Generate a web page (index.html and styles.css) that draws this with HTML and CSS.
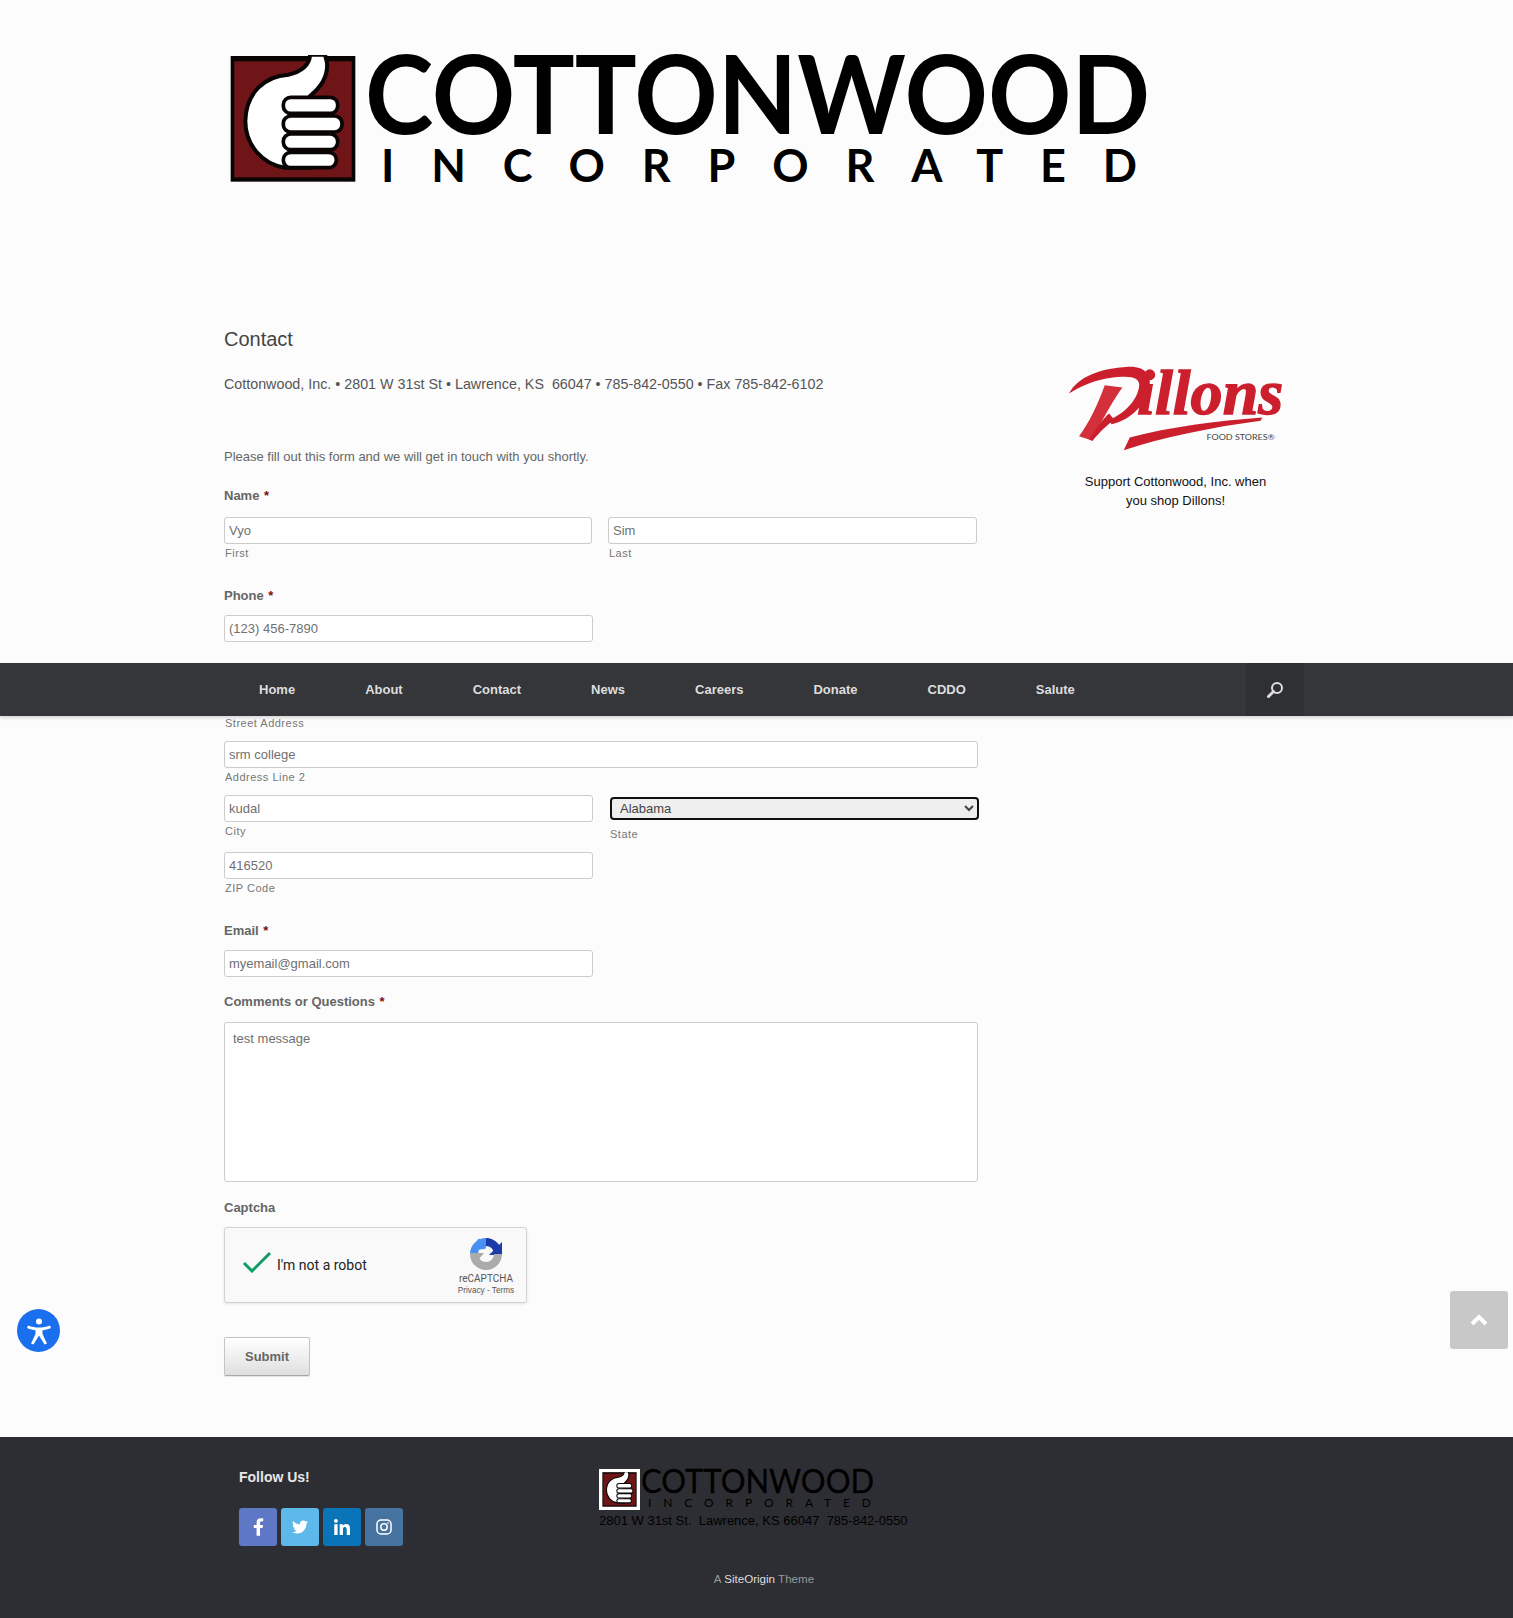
FILE: index.html
```html
<!DOCTYPE html>
<html lang="en">
  <head>
    <meta charset="UTF-8" />
    <meta name="viewport" content="width=device-width, initial-scale=1.0" />
    <title>Contact - Cottonwood, Inc.</title>
    <link rel="stylesheet" href="styles.css">
  </head>
  <body>
    <svg class="defs" width="0" height="0" aria-hidden="true">
      <symbol id="thumb" viewBox="90 78 378 382">
        <rect x="92" y="80" width="374" height="377" fill="#0a0505" />
        <rect x="103" y="96" width="352" height="348" fill="#6f1518" />
        <path d="M330 76 C330 105 305 128 265 136 C195 140 138 190 136 275 C136 345 185 405 255 415 L330 415 L330 200 C355 180 385 145 381 100 L375 76 Z" fill="#fff" stroke="#0a0505" stroke-width="12" />
        <rect x="250" y="204" width="163" height="48" rx="22" fill="#fff" stroke="#0a0505" stroke-width="11" />
        <rect x="250" y="260" width="176" height="48" rx="22" fill="#fff" stroke="#0a0505" stroke-width="11" />
        <rect x="250" y="314" width="163" height="47" rx="22" fill="#fff" stroke="#0a0505" stroke-width="11" />
        <rect x="250" y="369" width="159" height="46" rx="22" fill="#fff" stroke="#0a0505" stroke-width="11" />
      </symbol>
    </svg>

    <header class="site-header">
      <svg class="logo" viewBox="0 -30 980 180" role="img" aria-label="Cottonwood Incorporated">
        <use href="#thumb" x="6" y="5" width="126" height="128" />
        <text class="logo-name" x="141" y="84" textLength="785" lengthAdjust="spacingAndGlyphs">COTTONWOOD</text>
        <text class="logo-sub" x="157" y="132" textLength="756" lengthAdjust="spacing">INCORPORATED</text>
      </svg>
    </header>

    <nav class="main-nav">
      <div class="nav-inner">
        <ul class="nav-links">
          <li><a href="#">Home</a></li>
          <li><a href="#">About</a></li>
          <li><a href="#">Contact</a></li>
          <li><a href="#">News</a></li>
          <li><a href="#">Careers</a></li>
          <li><a href="#">Donate</a></li>
          <li><a href="#">CDDO</a></li>
          <li><a href="#">Salute</a></li>
        </ul>
        <div class="nav-search">
          <svg width="20" height="20" viewBox="0 0 20 20" fill="none" stroke="#ddd">
            <circle cx="12" cy="8" r="5" stroke-width="2" />
            <path d="M8.5 11.5 L3.5 16.5" stroke-width="3" stroke-linecap="round" />
          </svg>
        </div>
      </div>
    </nav>

    <main class="content">
      <div class="primary">
        <h1>Contact</h1>
        <p class="address-line">Cottonwood, Inc. • 2801 W 31st St • Lawrence, KS&nbsp; 66047 • 785-842-0550 • Fax 785-842-6102</p>
        <p class="intro">Please fill out this form and we will get in touch with you shortly.</p>

        <form class="contact-form">
          <div class="group group-name">
            <label class="field-label">Name <span class="req">*</span></label>
            <div class="row">
              <div class="half name-half">
                <input type="text" value="Vyo" />
                <span class="sub">First</span>
              </div>
              <div class="half name-half">
                <input type="text" value="Sim" />
                <span class="sub">Last</span>
              </div>
            </div>
          </div>

          <div class="group group-phone">
            <label class="field-label">Phone <span class="req">*</span></label>
            <input class="half-input" type="text" value="(123) 456-7890" />
          </div>

          <div class="group group-address">
            <label class="field-label">Address <span class="req">*</span></label>
            <input type="text" value="" />
            <span class="sub">Street Address</span>
            <div class="line">
              <input type="text" value="srm college" />
              <span class="sub">Address Line 2</span>
            </div>
            <div class="line row">
              <div class="half">
                <input type="text" value="kudal" />
                <span class="sub">City</span>
              </div>
              <div class="half state">
                <select>
                  <option>Alabama</option>
                </select>
                <span class="sub">State</span>
              </div>
            </div>
            <div class="line">
              <input class="half-input" type="text" value="416520" />
              <span class="sub">ZIP Code</span>
            </div>
          </div>

          <div class="group group-email">
            <label class="field-label">Email <span class="req">*</span></label>
            <input class="half-input" type="text" value="myemail@gmail.com" />
          </div>

          <div class="group group-comments">
            <label class="field-label">Comments or Questions <span class="req">*</span></label>
            <textarea>test message</textarea>
          </div>

          <div class="group group-captcha">
            <label class="field-label">Captcha</label>
            <div class="recaptcha">
              <svg class="recaptcha-check" width="30" height="22" viewBox="0 0 30 22" fill="none">
                <path d="M2 12 L10 20 L28 2" stroke="#0f9d63" stroke-width="3" />
              </svg>
              <span class="recaptcha-text">I'm not a robot</span>
              <div class="recaptcha-brand">
                <svg width="32" height="32" viewBox="0 0 32 32" fill="none">
                  <path d="M4 16 A12 12 0 0 1 16 4" stroke="#4a90f2" stroke-width="8" />
                  <path d="M8 1 L20 1 L15 11 L3 12 Z" fill="#4a90f2" />
                  <path d="M16 4 A12 12 0 0 1 28 16" stroke="#1c3aa9" stroke-width="8" />
                  <path d="M32 4 L32 17 L19 17 Z" fill="#1c3aa9" />
                  <path d="M28 16 A12 12 0 0 1 4 16" stroke="#ababab" stroke-width="8" />
                  <path d="M0 15 L14 15 L4 27 Z" fill="#ababab" />
                </svg>
                <span class="recaptcha-name">reCAPTCHA</span>
                <span class="recaptcha-links">Privacy - Terms</span>
              </div>
            </div>
          </div>

          <button class="submit" type="submit">Submit</button>
        </form>
      </div>

      <aside class="sidebar">
        <svg class="dillons" viewBox="55 15 650 290" role="img" aria-label="Dillons Food Stores">
          <path d="M58 130 C85 80 150 55 235 50 C285 47 308 75 298 115 C285 170 235 212 185 222 L180 208 C225 190 262 150 268 110 C272 85 250 78 215 80 C160 82 105 100 58 130 Z" fill="#cc1f2d" />
          <path d="M165 105 L218 112 C190 150 150 225 125 270 L88 258 C120 215 145 160 165 105 Z" fill="#d4303c" />
          <path d="M118 268 C140 235 160 205 178 190 L195 210 C175 220 150 245 128 272 Z" fill="#cc1f2d" />
          <text class="dillons-word" x="262" y="192" textLength="438" lengthAdjust="spacingAndGlyphs">illons</text>
          <path d="M222 300 L240 262 C360 230 500 212 637 202 L632 212 C480 232 340 262 222 300 Z" fill="#cc1f2d" />
          <text class="dillons-sub" x="470" y="270" textLength="205" lengthAdjust="spacingAndGlyphs">FOOD STORES®</text>
        </svg>
        <p class="dillons-text">Support Cottonwood, Inc. when you shop Dillons!</p>
      </aside>
    </main>

    <footer class="site-footer">
      <div class="footer-widgets">
        <div class="follow">
          <h3>Follow Us!</h3>
          <div class="socials">
            <a class="social fb" href="#">
              <svg width="11" height="18" viewBox="0 0 320 512" fill="#fff"><path d="M279.14 288l14.22-92.66h-88.91v-60.13c0-25.35 12.42-50.06 52.24-50.06h40.42V6.26S260.43 0 225.36 0c-73.22 0-121.08 44.38-121.08 124.72v70.62H22.89V288h81.39v224h100.17V288z" /></svg>
            </a>
            <a class="social tw" href="#">
              <svg width="16" height="16" viewBox="0 0 512 512" fill="#fff"><path d="M459.37 151.716c.325 4.548.325 9.097.325 13.645 0 138.72-105.583 298.558-298.558 298.558-59.452 0-114.68-17.219-161.137-47.106 8.447.974 16.568 1.299 25.34 1.299 49.055 0 94.213-16.568 130.274-44.832-46.132-.975-84.792-31.188-98.112-72.772 6.498.974 12.995 1.624 19.818 1.624 9.421 0 18.843-1.3 27.614-3.573-48.081-9.747-84.143-51.98-84.143-102.985v-1.299c13.969 7.797 30.214 12.67 47.431 13.319-28.264-18.843-46.781-51.005-46.781-87.391 0-19.492 5.197-37.36 14.294-52.954 51.655 63.675 129.3 105.258 216.365 109.807-1.624-7.797-2.599-15.918-2.599-24.04 0-57.828 46.782-104.934 104.934-104.934 30.213 0 57.502 12.67 76.67 33.137 23.715-4.548 46.456-13.32 66.599-25.34-7.798 24.366-24.366 44.833-46.132 57.827 21.117-2.273 41.584-8.122 60.426-16.243-14.292 20.791-32.161 39.308-52.628 54.253z" /></svg>
            </a>
            <a class="social li" href="#">
              <svg width="16" height="16" viewBox="0 0 448 448" fill="#fff"><path d="M100.28 448H7.4V148.9h92.88zM53.79 108.1C24.09 108.1 0 83.5 0 53.8a53.79 53.79 0 0 1 107.58 0c0 29.7-24.1 54.3-53.79 54.3zM447.9 448h-92.68V302.4c0-34.7-.7-79.2-48.29-79.2-48.29 0-55.69 37.7-55.69 76.7V448h-92.78V148.9h89.08v40.8h1.3c12.4-23.5 42.69-48.3 87.88-48.3 94 0 111.28 61.9 111.28 142.3V448z" /></svg>
            </a>
            <a class="social ig" href="#">
              <svg width="16" height="16" viewBox="0 0 16 16" fill="none" stroke="#fff" stroke-width="1.5">
                <rect x="1" y="1" width="14" height="14" rx="4" />
                <circle cx="8" cy="8" r="3.2" />
                <circle cx="12" cy="4" r="0.6" fill="#fff" stroke-width="0.5" />
              </svg>
            </a>
          </div>
        </div>
        <div class="footer-contact">
          <svg class="footer-logo" viewBox="0 -10 300 54" role="img" aria-label="Cottonwood Incorporated">
            <rect x="0" y="0" width="41" height="41" fill="#fff" />
            <use href="#thumb" x="3" y="3" width="35" height="35" />
            <text class="logo-name thin" x="42" y="24" textLength="233" lengthAdjust="spacingAndGlyphs">COTTONWOOD</text>
            <text class="logo-sub thin" x="49" y="38" textLength="223" lengthAdjust="spacing">INCORPORATED</text>
          </svg>
          <p>2801 W 31st St.&nbsp; Lawrence, KS 66047&nbsp; 785-842-0550</p>
        </div>
      </div>
      <div class="credits">A <a href="#">SiteOrigin</a> Theme</div>
    </footer>

    <a class="accessibility" href="#" aria-label="Accessibility">
      <svg width="42" height="42" viewBox="0 0 42 42" fill="#fff">
        <circle cx="21" cy="11.5" r="3" />
        <path d="M10 15.5 C14 17 17 17.5 21 17.5 C25 17.5 28 17 32 15.5 L33 18 C29.5 19.5 27 20 24.5 20.3 L24.5 24 L29 33.5 L26.5 34.5 L21 25.5 L15.5 34.5 L13 33.5 L17.5 24 L17.5 20.3 C15 20 12.5 19.5 9 18 Z" />
      </svg>
    </a>

    <a class="scroll-top" href="#" aria-label="Back to top">
      <svg width="20" height="14" viewBox="0 0 20 14" fill="none" stroke="#fff" stroke-width="4">
        <path d="M3 11 L10 4 L17 11" />
      </svg>
    </a>
  </body>
</html>
```

FILE: styles.css
```css
* {
  box-sizing: border-box;
}
body {
  position: relative;
  margin: 0;
  height: 1618px;
  overflow: hidden;
  background-color: #fcfcfc;
  font-family: "Liberation Sans", Arial, sans-serif;
  font-size: 13px;
  color: #666;
}
.defs {
  position: absolute;
}

/* header */
.site-header {
  height: 326px;
  padding: 20px 0 0 224px;
}
.logo {
  display: block;
  width: 980px;
  height: 180px;
}
.logo-name {
  font-family: Lato, sans-serif;
  font-weight: 700;
  font-size: 109px;
  fill: #000;
}
.logo-sub {
  font-family: Lato, sans-serif;
  font-weight: 700;
  font-size: 45px;
  fill: #000;
}
.logo-name.thin {
  font-size: 32px;
  font-weight: 400;
  stroke: #000;
  stroke-width: 0.3px;
}
.logo-sub.thin {
  font-size: 12px;
  font-weight: 400;
}

.main-nav {
  position: absolute;
  top: 663px;
  left: 0;
  right: 0;
  height: 53px;
  background-color: #343639;
  box-shadow: 0 2px 3px rgba(0, 0, 0, 0.15);
  z-index: 5;
}
.nav-inner {
  display: flex;
  justify-content: space-between;
  width: 1080px;
  height: 100%;
  margin-left: 224px;
}
.nav-links {
  display: flex;
  margin: 0;
  padding: 0;
  list-style: none;
}
.nav-links a {
  display: block;
  padding: 0 35px;
  line-height: 53px;
  font-weight: bold;
  color: #ddd;
  text-decoration: none;
}
.nav-search {
  display: flex;
  align-items: center;
  justify-content: center;
  width: 58px;
  background-color: #2f3033;
}

/* content */
.content {
  display: flex;
  padding-left: 224px;
}
.primary {
  flex: none;
  width: 754px;
}
.primary h1 {
  margin: 0;
  font-size: 20px;
  font-weight: normal;
  line-height: 26px;
  color: #444;
}
.address-line {
  margin: 22px 0 0;
  font-size: 14.3px;
  line-height: 20px;
  color: #555;
}
.intro {
  margin: 53px 0 19px;
  line-height: 20px;
}
.field-label {
  display: block;
  margin-bottom: 9px;
  font-weight: bold;
  line-height: 20px;
}
.req {
  margin-left: 1px;
  color: #790d0d;
}
input[type="text"] {
  display: block;
  width: 100%;
  height: 27px;
  padding: 0 4px;
  border: 1px solid #ccc;
  border-radius: 3px;
  background-color: #fff;
  font-family: inherit;
  font-size: 13px;
  color: #707070;
}
input.half-input {
  width: 369px;
}
.sub {
  display: block;
  margin: 2px 0 0 1px;
  font-size: 11px;
  line-height: 14px;
  letter-spacing: 0.5px;
  color: #777;
}
.row {
  display: flex;
}
.half {
  flex: none;
  width: 369px;
}
.name-half:first-child {
  width: 368px;
  margin-right: 16px;
}
.state {
  margin-left: 17px;
  padding-top: 2px;
}
.state select {
  display: block;
  width: 100%;
  height: 23px;
  padding: 0 4px;
  border: 2px solid #101010;
  border-radius: 4px;
  background-color: #efefef;
  font-family: inherit;
  font-size: 13px;
  color: #444;
}
.state .sub {
  margin-left: 0;
  margin-top: 7px;
}
.group-name .field-label {
  margin-bottom: 11px;
}
.group-phone {
  margin-top: 26px;
}
.group-address {
  margin-top: 16px;
}
.line {
  margin-top: 11px;
}
.group-email {
  margin-top: 26px;
}
.group-comments {
  margin-top: 15px;
}
.group-comments .field-label {
  margin-bottom: 10px;
}
.group-captcha {
  margin-top: 16px;
}
textarea {
  display: block;
  width: 754px;
  height: 160px;
  padding: 8px;
  border: 1px solid #ccc;
  border-radius: 3px;
  background-color: #fff;
  font-family: inherit;
  font-size: 13px;
  color: #707070;
  resize: none;
}

/* recaptcha box */
.recaptcha {
  display: flex;
  align-items: center;
  width: 303px;
  height: 76px;
  padding-left: 17px;
  border: 1px solid #d3d3d3;
  border-radius: 3px;
  background-color: #f9f9f9;
  box-shadow: 0 1px 3px rgba(0, 0, 0, 0.1);
}
.recaptcha-check {
  margin-top: -6px;
}
.recaptcha-text {
  margin-left: 5px;
  font-family: Roboto, sans-serif;
  font-size: 14px;
  color: #222;
}
.recaptcha-brand {
  display: flex;
  flex-direction: column;
  align-items: center;
  align-self: flex-start;
  width: 70px;
  margin-left: auto;
  margin-right: 5px;
  padding-top: 10px;
}
.recaptcha-name {
  margin-top: 3px;
  font-family: Roboto, sans-serif;
  font-size: 10px;
  line-height: 12px;
  color: #555;
}
.recaptcha-links {
  font-size: 8.2px;
  line-height: 11px;
  color: #555;
}
.submit {
  display: block;
  width: 86px;
  height: 39px;
  margin-top: 34px;
  border: 1px solid #c4c4c4;
  border-bottom-color: #a8a8a8;
  border-radius: 2px;
  background: linear-gradient(#fff, #dfdfdf);
  box-shadow: 0 1px 1px rgba(0, 0, 0, 0.1);
  font-family: inherit;
  font-size: 13px;
  font-weight: bold;
  color: #666;
}

/* sidebar */
.sidebar {
  width: 217px;
  margin-left: 90px;
  padding-top: 29px;
}
.dillons {
  display: block;
  width: 217px;
  height: 97px;
}
.dillons-word {
  font-family: "Liberation Serif", serif;
  font-style: italic;
  font-weight: 700;
  font-size: 190px;
  fill: #cc1f2d;
  stroke: #cc1f2d;
  stroke-width: 4px;
}
.dillons-sub {
  font-family: Lato, sans-serif;
  font-size: 24px;
  fill: #444;
}
.dillons-text {
  margin: 20px 11px 0 9px;
  line-height: 19px;
  text-align: center;
  color: #111;
}

/* footer */
.site-footer {
  position: absolute;
  top: 1437px;
  left: 0;
  right: 0;
  height: 181px;
  padding-top: 30px;
  background-color: #2d2e33;
}
.footer-widgets {
  display: flex;
  padding-left: 239px;
  height: 104px;
}
.follow {
  width: 360px;
}
.follow h3 {
  margin: 0 0 21px;
  font-size: 14px;
  line-height: 20px;
  color: #e6e6e6;
}
.socials {
  display: flex;
  gap: 4px;
}
.social {
  display: flex;
  align-items: center;
  justify-content: center;
  width: 38px;
  height: 38px;
  border-radius: 3px;
}
.fb {
  background-color: #5f78c6;
}
.tw {
  background-color: #5cb9ea;
}
.li {
  background-color: #0a74b8;
}
.ig {
  background-color: #4673a0;
}
.footer-contact {
  margin-top: -8px;
}
.footer-logo {
  display: block;
  width: 300px;
  height: 54px;
}
.footer-contact p {
  margin: 0;
  line-height: 15px;
  color: #000;
}
.credits {
  width: 1080px;
  margin: 0 0 0 224px;
  font-size: 11.6px;
  line-height: 16px;
  text-align: center;
  color: #999;
}
.credits a {
  color: #ddd;
  text-decoration: none;
}

/* floating buttons */
.accessibility {
  position: absolute;
  top: 1309px;
  left: 17px;
  width: 43px;
  height: 43px;
  border-radius: 50%;
  background-color: #1a6fee;
  display: flex;
  align-items: center;
  justify-content: center;
  z-index: 6;
}
.scroll-top {
  position: absolute;
  top: 1291px;
  left: 1450px;
  width: 58px;
  height: 58px;
  border-radius: 3px;
  background-color: #c8c8c8;
  display: flex;
  align-items: center;
  justify-content: center;
  z-index: 6;
}
```
